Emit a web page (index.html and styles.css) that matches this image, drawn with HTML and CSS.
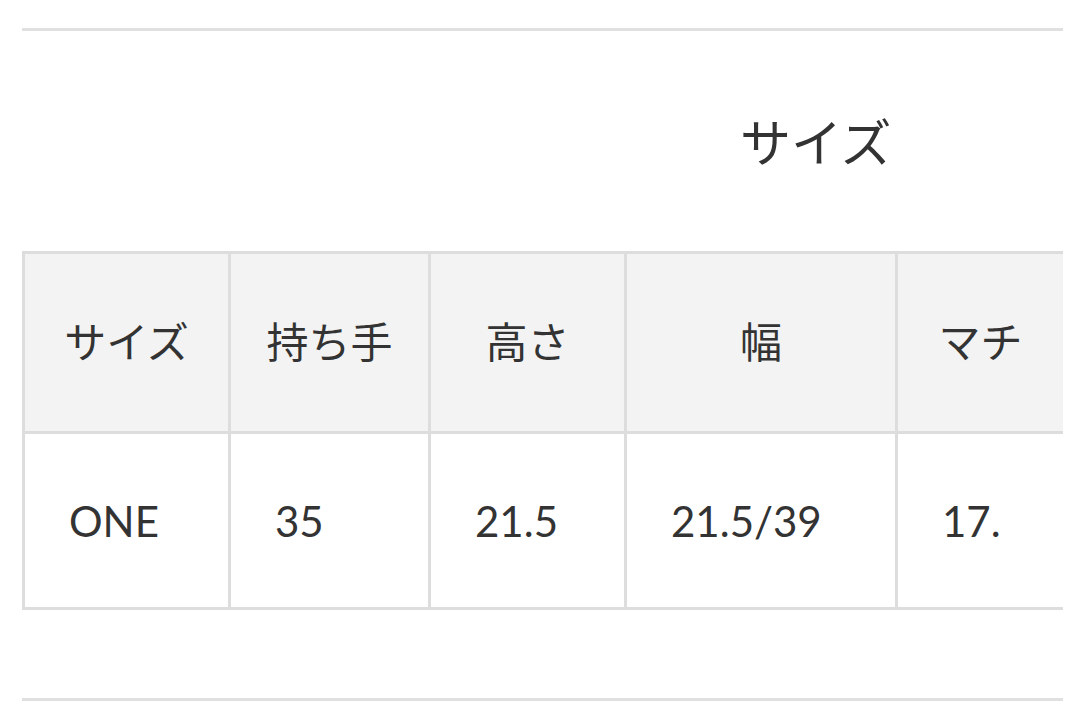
FILE: index.html
```html
<!DOCTYPE html>
<html lang="ja">
<head>
<meta charset="utf-8">
<title>サイズ</title>
<link rel="stylesheet" href="styles.css">
</head>
<body>
<div class="page">
  <div class="rule"></div>
  <h2 class="title">サイズ</h2>
  <table class="size-table">
    <colgroup>
      <col class="c1"><col class="c2"><col class="c3"><col class="c4"><col class="c5">
    </colgroup>
    <thead>
      <tr>
        <th>サイズ</th>
        <th>持ち手</th>
        <th>高さ</th>
        <th>幅</th>
        <th>マチ</th>
      </tr>
    </thead>
    <tbody>
      <tr>
        <td>ONE</td>
        <td>35</td>
        <td>21.5</td>
        <td>21.5/39</td>
        <td>17.</td>
      </tr>
    </tbody>
  </table>
  <div class="rule rule-bottom"></div>
</div>
</body>
</html>
```

FILE: styles.css
```css
html, body {
  margin: 0;
  padding: 0;
  background: #ffffff;
}

.page {
  padding: 28px 0 0 22px;
  width: 1041px;
  font-family: "Noto Sans CJK JP", "Noto Sans", sans-serif;
  color: #333333;
}

.rule {
  height: 3px;
  background: #e0e0e0;
}

.title {
  margin: 84px 0 0 718px;
  font-size: 51px;
  line-height: 51px;
  font-weight: 400;
  color: #333333;
}

.size-table {
  margin-top: 85px;
  width: 1041px;
  table-layout: fixed;
  border-collapse: separate;
  border-spacing: 0;
}

.c1 { width: 206px; }
.c2 { width: 200px; }
.c3 { width: 196px; }
.c4 { width: 271px; }
.c5 { width: 168px; }

.size-table th,
.size-table td {
  border-left: 3px solid #dddddd;
  border-top: 3px solid #dddddd;
  padding: 0;
  vertical-align: middle;
  white-space: nowrap;
  overflow: hidden;
}

.size-table th {
  height: 171px;
  padding-bottom: 6px;
  background: #f3f3f3;
  font-family: "Noto Sans CJK JP", sans-serif;
  font-size: 42px;
  font-weight: 400;
  text-align: center;
  color: #333333;
}

.size-table td {
  height: 173px;
  border-bottom: 3px solid #dddddd;
  padding-left: 44px;
  font-family: Lato, "Liberation Sans", sans-serif;
  font-size: 42px;
  text-align: left;
  color: #333333;
}

.rule-bottom {
  margin-top: 88px;
}
```
